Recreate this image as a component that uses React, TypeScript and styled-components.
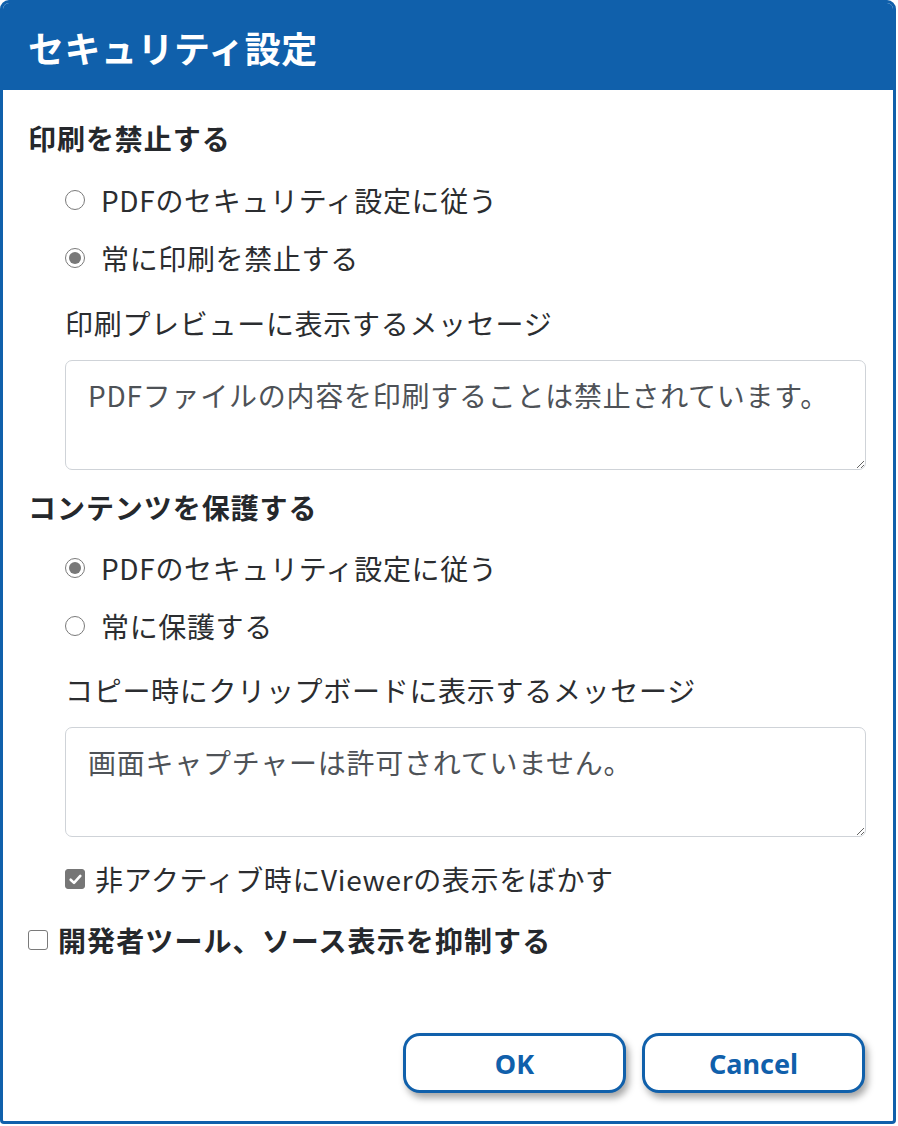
import React from "react";
import styled, { createGlobalStyle } from "styled-components";

const Global = createGlobalStyle`
  html, body { margin: 0; padding: 0; background: #ffffff; }
  body { font-family: "Noto Sans CJK JP", "Noto Sans", sans-serif; }
  * { box-sizing: border-box; }
`;

const BLUE = "#1060ab";

const Dialog = styled.div`
  width: 896px;
  height: 1124px;
  border: 3px solid ${BLUE};
  border-radius: 9px 9px 4px 4px;
  background: #fff;
  display: flex;
  flex-direction: column;
  overflow: hidden;
`;

const Header = styled.div`
  height: 87px;
  background: ${BLUE};
  display: flex;
  align-items: center;
  padding-left: 25px;
`;

const Title = styled.h1`
  margin: 0;
  color: #fff;
  font-size: 36px;
  font-weight: 700;
  line-height: 1;
  letter-spacing: 0.5px;
`;

const Body = styled.div`
  padding: 0 27px 0 25px;
  display: flex;
  flex-direction: column;
`;

const SectionTitle = styled.div<{ $mt: number }>`
  margin-top: ${(p) => p.$mt}px;
  font-size: 28px;
  font-weight: 700;
  line-height: 48px;
  letter-spacing: 0.95px;
  color: #25282c;
`;

const Indent = styled.div<{ $mt: number }>`
  margin-top: ${(p) => p.$mt}px;
  padding-left: 37px;
  display: flex;
  flex-direction: column;
`;

const RadioRow = styled.label`
  display: flex;
  align-items: center;
  gap: 16px;
  height: 58px;
  font-size: 28px;
  letter-spacing: 0.65px;
  color: #2b2d30;
  cursor: pointer;
`;

const RadioMark = styled.span<{ $on?: boolean }>`
  width: 20px;
  height: 20px;
  border-radius: 50%;
  border: 1px solid #7a7a7a;
  background: #fff;
  position: relative;
  flex: none;
  &::after {
    content: "";
    display: ${(p) => (p.$on ? "block" : "none")};
    position: absolute;
    left: 3px;
    top: 3px;
    width: 12px;
    height: 12px;
    border-radius: 50%;
    background: #787878;
  }
`;

const FieldLabel = styled.div<{ $mt: number }>`
  margin-top: ${(p) => p.$mt}px;
  font-size: 28px;
  line-height: 40px;
  letter-spacing: 0.7px;
  color: #2b2d30;
`;

const Message = styled.textarea<{ $mt: number }>`
  margin-top: ${(p) => p.$mt}px;
  width: 801px;
  height: 110px;
  border: 1px solid #cfd3d8;
  border-radius: 7px;
  padding: 14px 22px;
  font-family: "Noto Sans CJK JP", "Noto Sans", sans-serif;
  font-size: 28px;
  line-height: 40px;
  letter-spacing: 0.75px;
  color: #4e5257;
  resize: vertical;
  outline: none;
  display: block;
`;

const CheckRow = styled.label<{ $mt: number; $gap: number; $bold?: boolean }>`
  margin-top: ${(p) => p.$mt}px;
  display: flex;
  align-items: center;
  gap: ${(p) => p.$gap}px;
  height: 40px;
  font-size: 28px;
  font-weight: ${(p) => (p.$bold ? 700 : 400)};
  letter-spacing: ${(p) => (p.$bold ? "1.1px" : "0.65px")};
  color: ${(p) => (p.$bold ? "#25282c" : "#2b2d30")};
  cursor: pointer;
`;

const CheckMark = styled.span<{ $on?: boolean }>`
  width: 20px;
  height: 20px;
  border-radius: 3px;
  border: 1px solid ${(p) => (p.$on ? "#767676" : "#7a7a7a")};
  background: ${(p) => (p.$on ? "#767676" : "#fff")};
  display: flex;
  align-items: center;
  justify-content: center;
  flex: none;
`;

const Footer = styled.div`
  margin-top: 73px;
  padding-right: 28px;
  display: flex;
  justify-content: flex-end;
  gap: 16px;
`;

const Button = styled.button`
  width: 223px;
  height: 60px;
  border: 3px solid ${BLUE};
  border-radius: 17px;
  background: #fff;
  color: ${BLUE};
  font-family: "Noto Sans", "Noto Sans CJK JP", sans-serif;
  font-size: 27px;
  font-weight: 700;
  box-shadow: 3px 5px 7px rgba(0, 0, 0, 0.35);
  cursor: pointer;
`;

const Radio = ({ on, children }: { on?: boolean; children: React.ReactNode }) => (
  <RadioRow>
    <RadioMark $on={on} />
    <span>{children}</span>
  </RadioRow>
);

export default function App() {
  return (
    <>
      <Global />
      <Dialog>
        <Header>
          <Title>セキュリティ設定</Title>
        </Header>
        <Body>
          <SectionTitle $mt={24}>印刷を禁止する</SectionTitle>
          <Indent $mt={9}>
            <Radio>PDFのセキュリティ設定に従う</Radio>
            <Radio on>常に印刷を禁止する</Radio>
            <FieldLabel $mt={16}>印刷プレビューに表示するメッセージ</FieldLabel>
            <Message $mt={17} defaultValue="PDFファイルの内容を印刷することは禁止されています。" />
          </Indent>
          <SectionTitle $mt={13}>コンテンツを保護する</SectionTitle>
          <Indent $mt={8}>
            <Radio on>PDFのセキュリティ設定に従う</Radio>
            <Radio>常に保護する</Radio>
            <FieldLabel $mt={15}>コピー時にクリップボードに表示するメッセージ</FieldLabel>
            <Message $mt={17} defaultValue="画面キャプチャーは許可されていません。" />
            <CheckRow $mt={22} $gap={10}>
              <CheckMark $on>
                <svg width="15" height="15" viewBox="0 0 14 14">
                  <path d="M2.5 7.2 L5.6 10.2 L11.5 3.6" fill="none" stroke="#fff" strokeWidth="2.4" strokeLinecap="round" strokeLinejoin="round" />
                </svg>
              </CheckMark>
              <span>非アクティブ時にViewerの表示をぼかす</span>
            </CheckRow>
          </Indent>
          <CheckRow $mt={21} $gap={10} $bold>
            <CheckMark />
            <span>開発者ツール、ソース表示を抑制する</span>
          </CheckRow>
        </Body>
        <Footer>
          <Button>OK</Button>
          <Button>Cancel</Button>
        </Footer>
      </Dialog>
    </>
  );
}
